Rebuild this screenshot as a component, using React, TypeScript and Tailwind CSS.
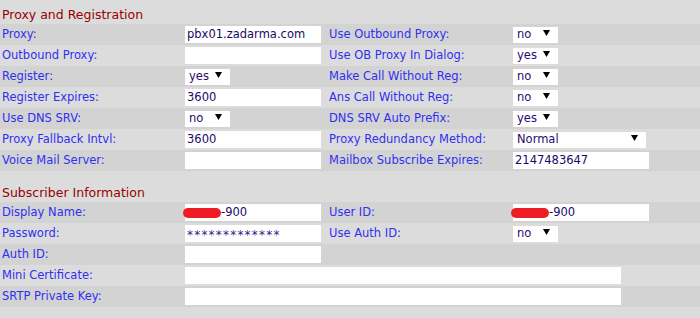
import React from "react";

type Field =
  | { kind: "input"; value?: string; wide?: boolean; redacted?: boolean; stars?: boolean }
  | { kind: "select"; value: string; wide?: boolean };

type Row = { left: string; lv: Field; right?: string; rv?: Field; span?: boolean };

const proxyRows: Row[] = [
  { left: "Proxy:", lv: { kind: "input", value: "pbx01.zadarma.com" }, right: "Use Outbound Proxy:", rv: { kind: "select", value: "no" } },
  { left: "Outbound Proxy:", lv: { kind: "input" }, right: "Use OB Proxy In Dialog:", rv: { kind: "select", value: "yes" } },
  { left: "Register:", lv: { kind: "select", value: "yes" }, right: "Make Call Without Reg:", rv: { kind: "select", value: "no" } },
  { left: "Register Expires:", lv: { kind: "input", value: "3600" }, right: "Ans Call Without Reg:", rv: { kind: "select", value: "no" } },
  { left: "Use DNS SRV:", lv: { kind: "select", value: "no" }, right: "DNS SRV Auto Prefix:", rv: { kind: "select", value: "yes" } },
  { left: "Proxy Fallback Intvl:", lv: { kind: "input", value: "3600" }, right: "Proxy Redundancy Method:", rv: { kind: "select", value: "Normal", wide: true } },
  { left: "Voice Mail Server:", lv: { kind: "input" }, right: "Mailbox Subscribe Expires:", rv: { kind: "input", value: "2147483647" } },
];

const subscriberRows: Row[] = [
  { left: "Display Name:", lv: { kind: "input", value: "-900", redacted: true }, right: "User ID:", rv: { kind: "input", value: "-900", redacted: true } },
  { left: "Password:", lv: { kind: "input", value: "*************", stars: true }, right: "Use Auth ID:", rv: { kind: "select", value: "no" } },
  { left: "Auth ID:", lv: { kind: "input" }, right: "" },
  { left: "Mini Certificate:", lv: { kind: "input", wide: true }, span: true },
  { left: "SRTP Private Key:", lv: { kind: "input", wide: true }, span: true },
];

function Value({ f }: { f: Field }) {
  if (f.kind === "select") {
    return (
      <div
        className={`flex h-[16px] items-center justify-between bg-white pl-[4px] pr-[8px] text-[#2a0a6e] ${
          f.wide ? "w-[133px]" : "w-[45px]"
        }`}
      >
        <span>{f.value}</span>
        <svg width="7" height="6" viewBox="0 0 7 6" className="mb-[3px]">
          <polygon points="0,0 7,0 3.5,6" fill="#000" />
        </svg>
      </div>
    );
  }
  return (
    <div
      className={`flex h-[17px] items-center bg-white pl-[2px] text-[#1a0a66] ${
        f.wide ? "w-[436px]" : "w-[136px]"
      }`}
    >
      {f.redacted && (
        <span className="-ml-[4px] inline-block h-[10px] w-[38px] rounded-full bg-[#ee1c24]" />
      )}
      <span className={f.stars ? "pt-[3px] text-[12px] tracking-[1.2px] text-[#3a1a8a]" : ""}>{f.value}</span>
    </div>
  );
}

function Rows({ rows }: { rows: Row[] }) {
  return (
    <div>
      {rows.map((r, i) => (
        <div
          key={r.left}
          className={`grid h-[21px] grid-cols-[185px_144px_184px_1fr] items-center ${
            i % 2 === 0 ? "bg-[#d3d3d3]" : "bg-[#dcdcdc]"
          }`}
        >
          <div className="pl-[2px] text-[#3030f0]">{r.left}</div>
          {r.span ? (
            <div className="col-span-3">
              <Value f={r.lv} />
            </div>
          ) : (
            <>
              <div>
                <Value f={r.lv} />
              </div>
              <div className="text-[#3030f0]">{r.right}</div>
              <div>{r.rv && <Value f={r.rv} />}</div>
            </>
          )}
        </div>
      ))}
    </div>
  );
}

export default function App() {
  return (
    <div
      className="h-[318px] w-[700px] overflow-hidden bg-[#dcdcdc] text-[11.5px] leading-none"
      style={{ fontFamily: '"DejaVu Sans", Verdana, sans-serif' }}
    >
      <div className="flex h-[24px] items-end pb-[3px] pl-[2px] text-[12.5px] text-[#990000]">
        Proxy and Registration
      </div>
      <Rows rows={proxyRows} />
      <div className="flex h-[31px] items-end pb-[3px] pl-[2px] text-[12.5px] text-[#990000]">
        Subscriber Information
      </div>
      <Rows rows={subscriberRows} />
    </div>
  );
}
